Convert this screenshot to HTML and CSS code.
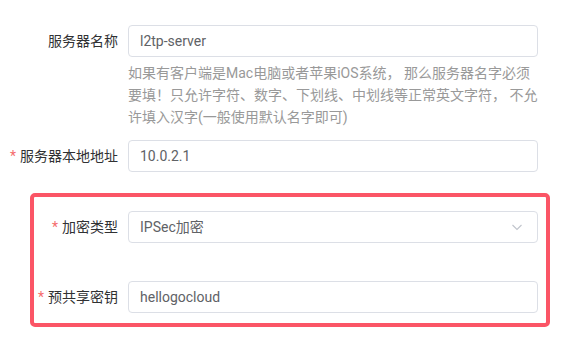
FILE: index.html
```html
<!DOCTYPE html>
<html lang="zh-CN">
<head>
<meta charset="utf-8">
<title>L2TP</title>
<link rel="stylesheet" href="styles.css">
</head>
<body>
<form class="form">
  <div class="row">
    <label class="label">服务器名称</label>
    <div class="input">l2tp-server</div>
    <div class="help">如果有客户端是Mac电脑或者苹果iOS系统， 那么服务器名字必须<br>要填！只允许字符、数字、下划线、中划线等正常英文字符， 不允<br>许填入汉字(一般使用默认名字即可)</div>
  </div>
  <div class="row">
    <label class="label"><span class="req">*</span>服务器本地地址</label>
    <div class="input">10.0.2.1</div>
  </div>
  <div class="highlight">
    <div class="row inner">
      <label class="label"><span class="req">*</span>加密类型</label>
      <div class="input select">IPSec加密
        <svg class="chev" width="12" height="12" viewBox="0 0 12 12"><polyline points="1.5,4 6,8.5 10.5,4" fill="none" stroke="#c0c4cc" stroke-width="1.1"/></svg>
      </div>
    </div>
    <div class="row inner gap">
      <label class="label"><span class="req">*</span>预共享密钥</label>
      <div class="input">hellogocloud</div>
    </div>
  </div>
</form>
</body>
</html>
```
FILE: styles.css
```css
* { box-sizing: border-box; }
body {
  margin: 0;
  background: #fff;
  font-family: Roboto, "Noto Sans CJK SC", sans-serif;
  font-size: 14px;
}
.form {
  padding-top: 25px;
}
.row {
  display: grid;
  grid-template-columns: 118px 410px;
  column-gap: 10px;
  align-items: center;
}
.row + .row { margin-top: 0; }
.label {
  text-align: right;
  color: #303133;
  line-height: 32px;
  white-space: nowrap;
}
.req {
  color: #f56c6c;
  margin-right: 4px;
}
.input {
  height: 32px;
  border: 1px solid #dcdfe6;
  border-radius: 4px;
  padding: 0 11px;
  line-height: 30px;
  color: #606266;
  background: #fff;
  position: relative;
}
.select .chev {
  position: absolute;
  right: 14px;
  top: 9px;
}
.help {
  grid-column: 2;
  margin-top: 5px;
  margin-bottom: 12px;
  line-height: 22px;
  color: #999;
  white-space: nowrap;
}
.highlight {
  margin: 21px 0 0 30px;
  width: 520px;
  border: 4px solid #fb5566;
  border-radius: 5px;
  padding: 14px 0 10px 0;
}
.row.inner {
  grid-template-columns: 84px 410px;
}
.row.inner.gap {
  margin-top: 38px;
}
```
